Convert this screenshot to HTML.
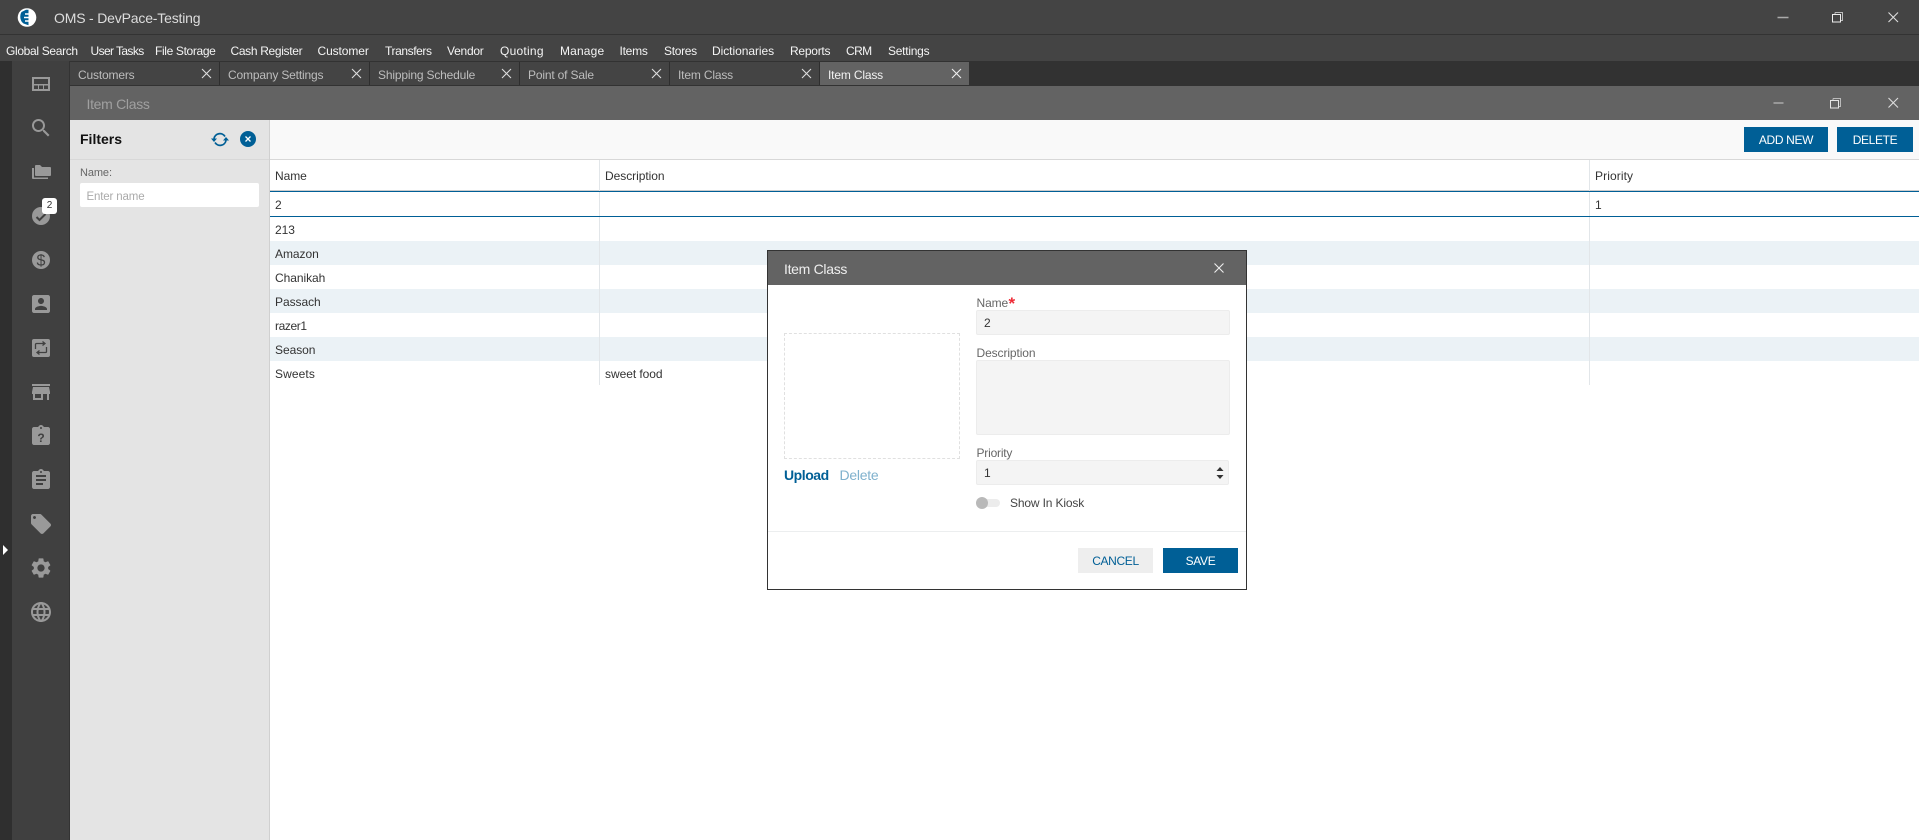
<!DOCTYPE html>
<html><head><meta charset="utf-8"><title>OMS - DevPace-Testing</title>
<style>
html,body{margin:0;padding:0;width:1919px;height:840px;overflow:hidden;background:#fff;font-family:"Liberation Sans",sans-serif;font-size:12px;color:#333}
.a,.t{position:absolute}
.t{white-space:nowrap;line-height:16px;height:16px}
.m{top:43px;color:#f4f4f4;letter-spacing:-.25px}
.tab{position:absolute;top:62px;height:23px;width:149px;background:#444;border-right:1px solid #2e2e2e}
.tab span{position:absolute;left:8px;top:5px;line-height:16px;color:#bdbdbd;letter-spacing:-.17px;white-space:nowrap}
.tab svg{position:absolute;left:131px;top:6px}
.ic{position:absolute;left:28.5px;width:24px;height:24px;fill:#999}
.row{position:absolute;left:270px;width:1649px;height:24px;background:#fff}
.row.z{background:#ebf2f6}
.row span{position:absolute;left:5px;top:5px;line-height:16px;letter-spacing:-.05px;color:#333;white-space:nowrap}
.row span.d{left:335px}
.btn{position:absolute;background:#005f96;color:#fff;text-align:center;line-height:26px;height:25px;letter-spacing:-.35px}
.lab{color:#666;letter-spacing:-.1px}
.inp{position:absolute;background:#f4f4f4;border:1px solid #ececec;box-sizing:border-box;border-radius:2px}
</style></head><body>

<!-- title bar -->
<div class="a" style="left:0;top:0;width:1919px;height:34px;background:#444"></div>
<div class="a" style="left:0;top:34px;width:1919px;height:1px;background:#333"></div>
<div class="a" style="left:0;top:35px;width:1919px;height:26px;background:#444"></div>
<svg class="a" style="left:17px;top:8px" width="20" height="19" viewBox="0 0 20 19"><circle cx="10" cy="9.5" r="9.300" fill="#fff"/><path d="M4.500 4C2.500 7 2.800 13 6.500 15.500L11.500 17.300V1.700L9 1.700z" fill="#005f96"/><path d="M8 6h5M7 9.500h7M8 13h5" stroke="#fff" stroke-width="1.400"/></svg>
<div class="t" style="left:54px;top:10px;font-size:14px;color:#ddd;letter-spacing:-.18px">OMS - DevPace-Testing</div>
<svg class="a" style="left:1770px;top:5px" width="140" height="30" viewBox="0 0 140 30"><path d="M7.500 12.500h11" stroke="#aaa" stroke-width="1.500"/><path d="M65 7.500h7.500v8h-2M65 7.500v2" fill="none" stroke="#bbb"/><rect x="62.500" y="9.500" width="8" height="7.500" fill="none" stroke="#eee"/><path d="M118.500 7.500l9.500 9.500M128 7.500l-9.500 9.500" stroke="#ddd" stroke-width="1.100"/></svg>

<!-- menu -->
<div class="t m" style="left:6px;letter-spacing:-.33px">Global Search</div>
<div class="t m" style="left:90.500px;letter-spacing:-.6px">User Tasks</div>
<div class="t m" style="left:155px;letter-spacing:-.35px">File Storage</div>
<div class="t m" style="left:230.500px;letter-spacing:-.33px">Cash Register</div>
<div class="t m" style="left:317.500px;letter-spacing:-.1px">Customer</div>
<div class="t m" style="left:385px;letter-spacing:-.4px">Transfers</div>
<div class="t m" style="left:447px">Vendor</div>
<div class="t m" style="left:500px;letter-spacing:.25px">Quoting</div>
<div class="t m" style="left:560px;letter-spacing:.15px">Manage</div>
<div class="t m" style="left:619.500px">Items</div>
<div class="t m" style="left:664px;letter-spacing:-.3px">Stores</div>
<div class="t m" style="left:712px;letter-spacing:-.05px">Dictionaries</div>
<div class="t m" style="left:790px">Reports</div>
<div class="t m" style="left:846px;letter-spacing:-.6px">CRM</div>
<div class="t m" style="left:888px">Settings</div>

<!-- tab row -->
<div class="a" style="left:0;top:61px;width:1919px;height:25px;background:#323232"></div>
<div class="a" style="left:12px;top:61px;width:58px;height:779px;background:#404040"></div>
<div class="a" style="left:0;top:61px;width:12px;height:779px;background:#2f2f2f"></div>
<div class="a" style="left:69px;top:61px;width:1px;height:779px;background:#333"></div>

<div class="tab" style="left:70px"><span>Customers</span><svg width="11" height="11"><path d="M1 1l9 9M10 1l-9 9" stroke="#ddd" stroke-width="1.100"/></svg></div>
<div class="tab" style="left:220px"><span>Company Settings</span><svg width="11" height="11"><path d="M1 1l9 9M10 1l-9 9" stroke="#ddd" stroke-width="1.100"/></svg></div>
<div class="tab" style="left:370px"><span>Shipping Schedule</span><svg width="11" height="11"><path d="M1 1l9 9M10 1l-9 9" stroke="#ddd" stroke-width="1.100"/></svg></div>
<div class="tab" style="left:520px"><span>Point of Sale</span><svg width="11" height="11"><path d="M1 1l9 9M10 1l-9 9" stroke="#ddd" stroke-width="1.100"/></svg></div>
<div class="tab" style="left:670px"><span>Item Class</span><svg width="11" height="11"><path d="M1 1l9 9M10 1l-9 9" stroke="#ddd" stroke-width="1.100"/></svg></div>
<div class="tab" style="left:820px;background:#636363;border-right:0"><span style="color:#f2f2f2">Item Class</span><svg width="11" height="11"><path d="M1 1l9 9M10 1l-9 9" stroke="#eee" stroke-width="1.100"/></svg></div>

<!-- sidebar icons -->
<svg class="ic" style="top:72px" viewBox="0 0 24 24"><path fill-rule="evenodd" d="M3 5h18v14H3zM5 7v5h14V7zM5 13.500V17h4v-3.500zM10 13.500V17h4v-3.500zM15 13.500V17h4v-3.500z"/></svg>
<svg class="ic" style="top:116px" viewBox="0 0 24 24"><path d="M15.500 14h-.79l-.28-.27C15.410 12.590 16 11.110 16 9.500 16 5.910 13.090 3 9.500 3S3 5.910 3 9.500 5.910 16 9.500 16c1.610 0 3.090-.59 4.230-1.570l.27.28v.79l5 4.990L20.490 19l-4.990-5zm-6 0C7.010 14 5 11.990 5 9.500S7.010 5 9.500 5 14 7.010 14 9.500 11.990 14 9.500 14z"/></svg>
<svg class="ic" style="top:160px" viewBox="0 0 24 24"><path d="M3 8v10c0 .6.400 1 1 1h15v-1.500H5V8zM7 5c-.6 0-1 .4-1 1v9c0 .6.400 1 1 1h14c.6 0 1-.4 1-1V8c0-.6-.4-1-1-1h-8l-2-2z"/></svg>
<svg class="ic" style="top:204px" viewBox="0 0 24 24"><path d="M12 3a9 9 0 1 0 0 18 9 9 0 0 0 0-18z"/><path d="M7.500 13l3 3 6-6" fill="none" stroke="#404040" stroke-width="2"/></svg>
<div class="a" style="left:42px;top:198px;width:15px;height:16px;background:#fff;border-radius:3px;color:#333;font-size:10px;line-height:16px;text-align:center">2</div>
<svg class="ic" style="top:248px" viewBox="0 0 24 24"><circle cx="12" cy="12" r="9"/><text x="12" y="17.500" text-anchor="middle" font-family="Liberation Sans" font-size="16" fill="#404040">$</text></svg>
<svg class="ic" style="top:292px" viewBox="0 0 24 24"><path d="M3 5v14c0 1.100.89 2 2 2h14c1.100 0 2-.9 2-2V5c0-1.100-.9-2-2-2H5c-1.110 0-2 .9-2 2zm12 4c0 1.660-1.340 3-3 3s-3-1.340-3-3 1.340-3 3-3 3 1.340 3 3zm-9 8c0-2 4-3.100 6-3.100s6 1.100 6 3.100v1H6v-1z"/></svg>
<svg class="ic" style="top:336px" viewBox="0 0 24 24"><rect x="3" y="3" width="18" height="18" rx="2"/><path d="M6.500 13V8.500c0-.6.400-1 1-1h8M13.500 5.500l2.500 2-2.500 2M17.500 11v4.500c0 .6-.4 1-1 1h-8M10.500 14.500l-2.500 2 2.500 2" fill="none" stroke="#404040" stroke-width="1.300"/></svg>
<svg class="ic" style="top:380px" viewBox="0 0 24 24"><path d="M21 4H3v2h18V4zm0 10v-2l-1-5H4l-1 5v2h1v6h10v-6h4v6h2v-6h1zm-9 4H6v-4h6v4z"/></svg>
<svg class="ic" style="top:424px" viewBox="0 0 24 24"><path d="M19 3h-4.180C14.400 1.840 13.300 1 12 1c-1.300 0-2.400.84-2.820 2H5c-1.100 0-2 .9-2 2v14c0 1.100.9 2 2 2h14c1.100 0 2-.9 2-2V5c0-1.100-.9-2-2-2zm-7 0c.55 0 1 .45 1 1s-.45 1-1 1-1-.45-1-1 .45-1 1-1z"/><text x="12" y="18" text-anchor="middle" font-family="Liberation Sans" font-weight="bold" font-size="12" fill="#404040">?</text></svg>
<svg class="ic" style="top:468px" viewBox="0 0 24 24"><path d="M19 3h-4.180C14.400 1.840 13.300 1 12 1c-1.300 0-2.400.84-2.820 2H5c-1.100 0-2 .9-2 2v14c0 1.100.9 2 2 2h14c1.100 0 2-.9 2-2V5c0-1.100-.9-2-2-2zm-7 0c.55 0 1 .45 1 1s-.45 1-1 1-1-.45-1-1 .45-1 1-1zm2 14H7v-2h7v2zm3-4H7v-2h10v2zm0-4H7V7h10v2z"/></svg>
<svg class="ic" style="top:512px" viewBox="0 0 24 24"><path d="M21.410 11.580l-9-9C12.050 2.220 11.550 2 11 2H4c-1.100 0-2 .9-2 2v7c0 .55.22 1.050.59 1.420l9 9c.36.36.86.58 1.410.58.55 0 1.050-.22 1.410-.59l7-7c.37-.36.59-.86.59-1.410 0-.55-.23-1.060-.59-1.420zM5.500 7C4.670 7 4 6.330 4 5.500S4.670 4 5.500 4 7 4.670 7 5.500 6.330 7 5.500 7z"/></svg>
<svg class="ic" style="top:556px" viewBox="0 0 24 24"><path d="M19.140 12.940c.04-.3.06-.61.06-.94 0-.32-.02-.64-.07-.94l2.030-1.580c.18-.14.23-.41.12-.61l-1.920-3.320c-.12-.22-.37-.29-.59-.22l-2.390.96c-.5-.38-1.030-.7-1.620-.94l-.36-2.540c-.04-.24-.24-.41-.48-.41h-3.840c-.24 0-.43.17-.47.41l-.36 2.540c-.59.24-1.130.57-1.620.94l-2.390-.96c-.22-.08-.47 0-.59.22L2.740 8.870c-.12.21-.08.47.12.61l2.030 1.580c-.05.3-.09.63-.09.94s.02.64.07.94l-2.030 1.580c-.18.14-.23.41-.12.61l1.920 3.320c.12.22.37.29.59.22l2.390-.96c.5.38 1.030.7 1.620.94l.36 2.540c.05.24.24.41.48.41h3.840c.24 0 .44-.17.47-.41l.36-2.540c.59-.24 1.130-.56 1.620-.94l2.390.96c.22.08.47 0 .59-.22l1.920-3.320c.12-.22.07-.47-.12-.61l-2.010-1.580zM12 15.600c-1.980 0-3.600-1.620-3.600-3.600s1.620-3.600 3.600-3.600 3.600 1.620 3.600 3.600-1.620 3.600-3.600 3.600z"/></svg>
<svg class="ic" style="top:600px" viewBox="0 0 24 24"><path d="M11.990 2C6.470 2 2 6.480 2 12s4.470 10 9.990 10C17.520 22 22 17.520 22 12S17.520 2 11.990 2zm6.930 6h-2.950c-.32-1.250-.78-2.450-1.380-3.560 1.840.63 3.370 1.910 4.330 3.560zM12 4.040c.83 1.200 1.480 2.530 1.910 3.960h-3.820c.43-1.430 1.080-2.760 1.910-3.960zM4.260 14C4.100 13.360 4 12.690 4 12s.1-1.360.26-2h3.380c-.08.66-.14 1.320-.14 2 0 .68.06 1.340.14 2H4.260zm.82 2h2.950c.32 1.250.78 2.450 1.380 3.560-1.840-.63-3.370-1.900-4.330-3.560zm2.950-8H5.080c.96-1.660 2.490-2.930 4.330-3.560C8.810 5.550 8.350 6.750 8.030 8zM12 19.960c-.83-1.200-1.480-2.530-1.910-3.960h3.820c-.43 1.430-1.080 2.760-1.910 3.960zM14.340 14H9.660c-.09-.66-.16-1.320-.16-2 0-.68.07-1.350.16-2h4.680c.09.650.16 1.320.16 2 0 .68-.07 1.340-.16 2zm.25 5.560c.6-1.110 1.060-2.310 1.380-3.560h2.950c-.96 1.650-2.490 2.930-4.330 3.560zM16.360 14c.08-.66.14-1.320.14-2 0-.68-.06-1.340-.14-2h3.380c.16.640.26 1.310.26 2s-.1 1.360-.26 2h-3.380z"/></svg>
<svg class="a" style="left:2px;top:544px" width="7" height="12"><path d="M1 1l5 5-5 5z" fill="#fff"/></svg>

<!-- inner window title -->
<div class="a" style="left:70px;top:86px;width:1849px;height:34px;background:#636363"></div>
<div class="t" style="left:86.500px;top:96px;font-size:14px;color:#a0a0a0;letter-spacing:-.3px">Item Class</div>
<svg class="a" style="left:1770px;top:90px" width="140" height="26" viewBox="0 0 140 26"><path d="M3.500 13h10" stroke="#aaa" stroke-width="1.500"/><path d="M63 8.500h7.500v8h-2M63 8.500v2" fill="none" stroke="#bbb"/><rect x="60.500" y="10.500" width="8" height="7.500" fill="none" stroke="#e4e4e4"/><path d="M118.500 8l9.500 9.500M128 8l-9.500 9.500" stroke="#ddd" stroke-width="1.100"/></svg>

<!-- filters -->
<div class="a" style="left:70px;top:120px;width:199px;height:720px;background:#e4e4e4"></div>
<div class="a" style="left:70px;top:159px;width:199px;height:1px;background:#d8d8d8"></div>
<div class="a" style="left:269px;top:120px;width:1px;height:720px;background:#d0d0d0"></div>
<div class="t" style="left:80px;top:131px;font-size:14px;font-weight:bold;color:#111;letter-spacing:0">Filters</div>
<svg class="a" style="left:211px;top:131px" width="18" height="17" viewBox="0 0 18 17"><path d="M3 7.500A6 6 0 0 1 14 5.500M15 9.500A6 6 0 0 1 4 11.500" fill="none" stroke="#005f96" stroke-width="1.700"/><path d="M0 7.500h6L3 11zM12 9.500h6L15 6z" fill="#005f96"/></svg>
<svg class="a" style="left:240px;top:131px" width="16" height="16"><circle cx="8" cy="8" r="8" fill="#005f96"/><path d="M5.500 5.500l5 5M10.500 5.500l-5 5" stroke="#fff" stroke-width="1.300"/></svg>
<div class="t lab" style="left:80px;top:164.500px;font-size:11px;color:#666">Name:</div>
<div class="a" style="left:80px;top:183px;width:179px;height:24px;background:#fff;border-radius:2px"></div>
<div class="t" style="left:86.500px;top:188.500px;font-size:11.500px;color:#aaa;letter-spacing:-.15px">Enter name</div>

<!-- toolbar -->
<div class="a" style="left:270px;top:120px;width:1649px;height:39px;background:#f9f9f9"></div>
<div class="a" style="left:270px;top:159px;width:1649px;height:1px;background:#d8d8d8"></div>
<div class="btn" style="left:1744px;top:127px;width:84px">ADD NEW</div>
<div class="btn" style="left:1837px;top:127px;width:76px">DELETE</div>

<!-- table -->
<div class="t" style="left:275px;top:168px;letter-spacing:-.05px">Name</div>
<div class="t" style="left:605px;top:168px;letter-spacing:-.05px">Description</div>
<div class="t" style="left:1595px;top:168px;letter-spacing:.1px">Priority</div>
<div class="t" style="left:275px;top:197px">2</div>
<div class="t" style="left:1595px;top:197px">1</div>
<div class="a" style="left:270px;top:190px;width:1649px;height:1px;background:#ccc"></div>
<div class="row" style="top:217px"><span>213</span></div>
<div class="row z" style="top:241px"><span>Amazon</span></div>
<div class="row" style="top:265px"><span>Chanikah</span></div>
<div class="row z" style="top:289px"><span>Passach</span></div>
<div class="row" style="top:313px"><span style="letter-spacing:-.4px">razer1</span></div>
<div class="row z" style="top:337px"><span>Season</span></div>
<div class="row" style="top:361px"><span style="letter-spacing:.1px">Sweets</span><span class="d">sweet food</span></div>
<div class="a" style="left:599px;top:160px;width:1px;height:225px;background:#e2e6e9"></div>
<div class="a" style="left:1589px;top:160px;width:1px;height:225px;background:#e2e6e9"></div>
<div class="a" style="left:270px;top:191px;width:1649px;height:1px;background:#005f96"></div>
<div class="a" style="left:270px;top:216px;width:1649px;height:1px;background:#005f96"></div>

<!-- modal -->
<div class="a" style="left:767px;top:250px;width:480px;height:340px;box-sizing:border-box;border:1px solid #333;background:#fff"></div>
<div class="a" style="left:768px;top:251px;width:478px;height:34px;background:#636363"></div>
<div class="t" style="left:784px;top:261px;font-size:14px;color:#eee;letter-spacing:-.3px">Item Class</div>
<svg class="a" style="left:1213px;top:262px" width="12" height="12"><path d="M1.500 1.500l9 9M10.500 1.500l-9 9" stroke="#eee" stroke-width="1.100"/></svg>

<div class="a" style="left:784px;top:333px;width:176px;height:126px;box-sizing:border-box;border:1px dashed #e0e0e0"></div>
<div class="t" style="left:784px;top:467px;font-size:14px;font-weight:bold;color:#005f96;letter-spacing:-.45px">Upload</div>
<div class="t" style="left:839.500px;top:467px;font-size:14px;color:#7fb1cd;letter-spacing:-.25px">Delete</div>

<div class="t lab" style="left:976.500px;top:295px">Name</div>
<div class="t" style="left:1008.500px;top:295px;color:#ee2a35;font-size:17px;font-weight:bold;line-height:18px;height:18px">*</div>
<div class="inp" style="left:976px;top:310px;width:254px;height:25px"></div>
<div class="t" style="left:984px;top:314.500px">2</div>
<div class="t lab" style="left:976.500px;top:345px">Description</div>
<div class="inp" style="left:976px;top:360px;width:254px;height:75px"></div>
<div class="t lab" style="left:976.500px;top:445px;letter-spacing:-.2px">Priority</div>
<div class="inp" style="left:976px;top:460px;width:253px;height:25px"></div>
<div class="t" style="left:984px;top:464.500px">1</div>
<svg class="a" style="left:1215px;top:465px" width="10" height="16"><path d="M1.500 6L5 2l3.500 4zM1.500 10L5 14l3.500-4z" fill="#333"/></svg>
<div class="a" style="left:976px;top:499px;width:24px;height:8px;border-radius:4px;background:#ececec"></div>
<div class="a" style="left:976px;top:497px;width:12px;height:12px;border-radius:6px;background:#b9b9b9"></div>
<div class="t" style="left:1010px;top:495px;color:#444;letter-spacing:-.15px">Show In Kiosk</div>
<div class="a" style="left:768px;top:531px;width:478px;height:1px;background:#eceeef"></div>
<div class="btn" style="left:1078px;top:548px;width:75px;background:#eee;color:#005f96">CANCEL</div>
<div class="btn" style="left:1163px;top:548px;width:75px">SAVE</div>

</body></html>
